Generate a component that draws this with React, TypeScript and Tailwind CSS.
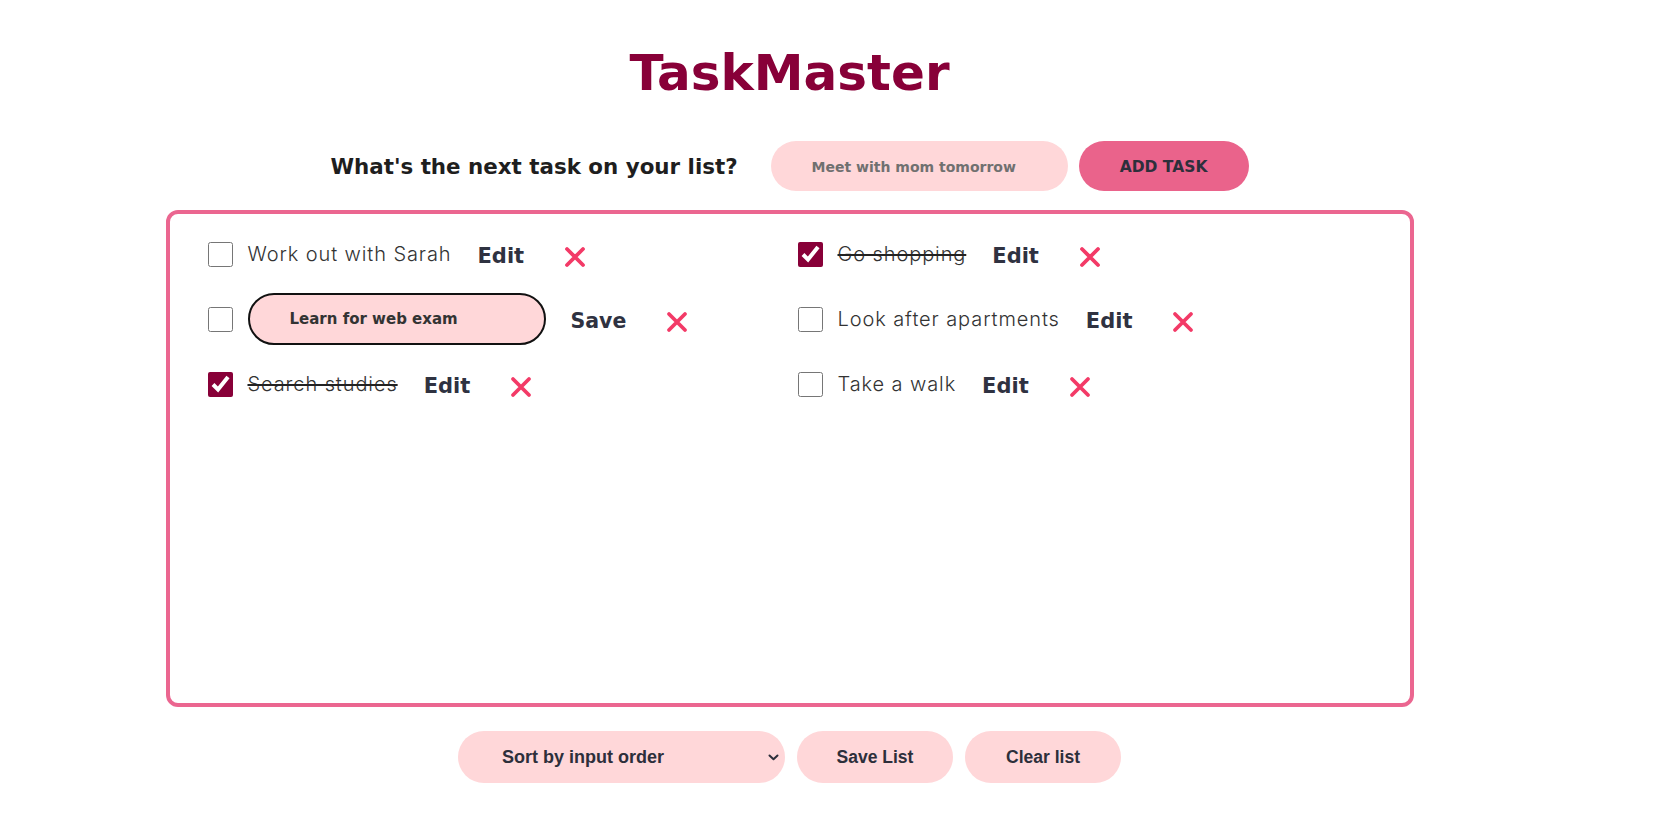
import React from "react";

type Task = { text: string; done: boolean; editing?: boolean };

const tasks: Task[] = [
  { text: "Work out with Sarah", done: false },
  { text: "Go shopping", done: true },
  { text: "Learn for web exam", done: false, editing: true },
  { text: "Look after apartments", done: false },
  { text: "Search studies", done: true },
  { text: "Take a walk", done: false },
];

const XIcon = () => (
  <svg width="22" height="22" viewBox="0 0 22 22" fill="none">
    <path d="M3 3 L19 19 M19 3 L3 19" stroke="#f33a67" strokeWidth="3.8" strokeLinecap="round" />
  </svg>
);

const TaskRow = ({ t }: { t: Task }) => (
  <div className="flex h-[52px] items-center">
    <input
      type="checkbox"
      defaultChecked={t.done}
      className="m-0 h-[25px] w-[25px] shrink-0 accent-[#880038]"
    />
    {t.editing ? (
      <>
        <input
          defaultValue={t.text}
          className="ml-[15px] h-[52px] w-[298px] rounded-full border-2 border-[#111] bg-[#ffd7d9] pl-[40px] text-[15px] font-bold text-[#333] outline-none [font-family:'DejaVu_Sans',sans-serif]"
        />
        <button className="ml-[25px] pt-[5px] text-[20.5px] font-bold text-[#2f3241] [font-family:'DejaVu_Sans',sans-serif]">
          Save
        </button>
        <button className="ml-[40px] pt-[6px]">
          <XIcon />
        </button>
      </>
    ) : (
      <>
        <span
          className={`ml-[15px] text-[20px] font-light tracking-[0.9px] text-[#333] [font-family:Inter,sans-serif] ${
            t.done ? "line-through decoration-[#222]" : ""
          }`}
        >
          {t.text}
        </span>
        <button className="ml-[26px] pt-[6px] text-[21px] font-bold text-[#2f3241] [font-family:'DejaVu_Sans',sans-serif]">
          Edit
        </button>
        <button className="ml-[40px] pt-[6px]">
          <XIcon />
        </button>
      </>
    )}
  </div>
);

export default function App() {
  return (
    <div className="min-h-[822px] w-full bg-white">
      <div className="flex w-[1579px] flex-col items-center pt-[48px]">
        <h1 className="text-[50px] font-bold leading-none text-[#880038] [font-family:'DejaVu_Sans',sans-serif]">
          TaskMaster
        </h1>
        <div className="mt-[43px] flex h-[50px] items-center">
          <span className="pt-[3px] text-[21.4px] font-bold text-[#1e1e1e] [font-family:'DejaVu_Sans',sans-serif]">
            What's the next task on your list?
          </span>
          <input
            placeholder="Meet with mom tomorrow"
            className="ml-[33px] h-[50px] w-[297px] rounded-full bg-[#ffd7d9] pl-[41px] pt-[1px] text-[14px] font-bold text-[#333] outline-none placeholder:text-[#707070] [font-family:'DejaVu_Sans',sans-serif]"
          />
          <button className="ml-[11px] h-[50px] w-[170px] rounded-full bg-[#ea638b] pt-[3px] text-[15.5px] font-bold text-[#2d2f3b] [font-family:'DejaVu_Sans',sans-serif]">
            ADD TASK
          </button>
        </div>
        <div className="mt-[19px] h-[497px] w-[1248px] rounded-[12px] border-4 border-[#eb6690] pl-[38px] pt-[14px]">
          <div className="grid grid-cols-[590px_590px] gap-y-[13px]">
            {tasks.map((t, i) => (
              <TaskRow key={i} t={t} />
            ))}
          </div>
        </div>
        <div className="mt-[24px] flex items-center gap-[12px] [font-family:'Liberation_Sans',Arial,sans-serif]">
          <div className="flex h-[52px] w-[327px] items-center rounded-full bg-[#ffd7d9] pl-[44px] pr-[6px]">
            <select className="flex-1 appearance-none bg-transparent text-[18px] font-bold text-[#2d2f3b] outline-none">
              <option>Sort by input order</option>
            </select>
            <svg width="11" height="7" viewBox="0 0 11 7" fill="none">
              <path d="M1.5 1.5 L5.5 5.3 L9.5 1.5" stroke="#2d2f3b" strokeWidth="2" strokeLinecap="round" strokeLinejoin="round" />
            </svg>
          </div>
          <button className="h-[52px] w-[156px] rounded-full bg-[#ffd7d9] text-[17.5px] font-bold text-[#2d2f3b]">
            Save List
          </button>
          <button className="h-[52px] w-[156px] rounded-full bg-[#ffd7d9] text-[17.5px] font-bold text-[#2d2f3b]">
            Clear list
          </button>
        </div>
      </div>
    </div>
  );
}
